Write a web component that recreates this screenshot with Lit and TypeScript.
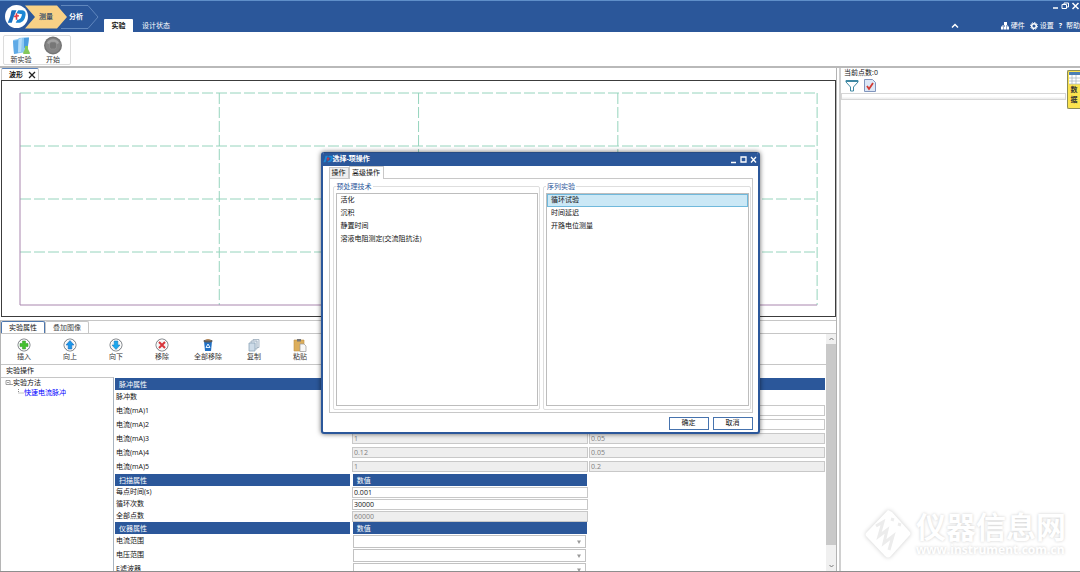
import { LitElement, html, css, svg } from "lit";
import { customElement, property } from "lit/decorators.js";

const base = css`
  :host {
    font: 7px/10px "Open Sans", "Noto Sans CJK SC", sans-serif;
    color: #111;
  }
  *,
  *::before {
    box-sizing: border-box;
  }
  svg {
    display: block;
    flex: none;
  }
  button,
  input,
  select {
    font: inherit;
    color: inherit;
    margin: 0;
    padding: 0;
    border: 0;
    border-radius: 0;
    background: none;
    min-width: 0;
    outline: none;
  }
  button {
    white-space: nowrap;
  }
`;

const brand = (size: number, tint = "#1a6fc0") => html`<svg width=${size} height=${size} viewBox="0 0 24 24" aria-hidden="true">
  <path d="M6 4h6l-3 7-3 9H1l3-8c1-3 1-6 2-8z" fill=${tint} />
  <path d="M14 4h5c5 0 5 5 4 8-1 5-4 8-9 8h-3l2-4c4 0 5-3 6-7l-7-1z" fill="#1b87d4" />
  <path d="M12 8v8M9 12l6-1" stroke="#e2333f" stroke-width="2" />
</svg>`;

const ring = svg`<circle cx="7" cy="7" r="6" fill="#f4f4f4" stroke="#6f7479"/><circle cx="7" cy="7" r="5" fill="none" stroke="#fff"/>`;
const toolIcons: Record<string, unknown> = {
  insert: svg`${ring}<path d="M5.500 3h3v2.500H11v3H8.500V11h-3V8.500H3v-3h2.500z" fill="#43c02e" stroke="#2c9a24" stroke-width=".5"/>`,
  up: svg`${ring}<path d="M7 2.500L11 7H8.800v4H5.200V7H3z" fill="#1c97ea" stroke="#0d63b8" stroke-width=".5"/>`,
  down: svg`${ring}<path d="M7 11.500L11 7H8.800V3H5.200v4H3z" fill="#1ca8ee" stroke="#0d76b8" stroke-width=".5"/>`,
  remove: svg`${ring}<path d="M4 4l6 6M10 4l-6 6" stroke="#d8363c" stroke-width="2"/>`,
  clear: svg`<path d="M3 3h8l-1 10H4z" fill="#1f6fc4"/><ellipse cx="7" cy="3" rx="4.500" ry="1.500" fill="#5c5c5c"/><path d="M4 2.500c1-2 5-2 6 0" fill="#b58a5c"/><path d="M7 6l2 3.500H5z" fill="none" stroke="#e4f2ff"/>`,
  copy: svg`<path d="M6 1.500h6v8H6z" fill="#e9eff5" stroke="#9aabbb" stroke-width=".8"/><path d="M4 3h6v8H4z" fill="#dfe8f0" stroke="#9aabbb" stroke-width=".8"/><path d="M2 5h6v8H2z" fill="#cddbe8" stroke="#8ea4b8" stroke-width=".8"/>`,
  paste: svg`<path d="M1 2h10v11H1z" fill="#dcae5c" stroke="#c09145" stroke-width=".6"/><path d="M4 1h4v2.500H4z" fill="#777"/><path d="M7 6h4l2 2v5.500H7z" fill="#f8f8f8" stroke="#9a9a9a" stroke-width=".7"/>`,
};

@customElement("app-header")
class AppHeader extends LitElement {
  static styles = [
    base,
    css`
      :host {
        display: block;
      }
      .bar {
        display: flex;
        height: 32px;
        background: #2b579a;
        border-top: 1px solid #5f8fc9;
        color: #fff;
        padding-left: 5px;
      }
      .logo {
        width: 23px;
        height: 23px;
        margin-top: 4px;
        border-radius: 50%;
        background: #fff;
        display: grid;
        place-items: center;
        flex: none;
      }
      .steps {
        display: grid;
        grid-template: 24px / 40px 22px;
        margin: 4px 17px 0 -3px;
      }
      .arrows {
        grid-area: 1 / 1 / 2 / 3;
      }
      .step {
        grid-area: 1 / 2;
        font-weight: bold;
        z-index: 1;
      }
      .current {
        grid-area: 1 / 1;
        color: #45566a;
        padding-left: 2px;
      }
      .tabs {
        display: flex;
        align-items: flex-end;
      }
      .tab {
        height: 13px;
        width: 29px;
        text-align: center;
      }
      .wide {
        width: 46px;
      }
      .active {
        background: #fff;
        color: #111;
        border-radius: 1px 1px 0 0;
        font-weight: bold;
      }
      .right {
        margin-left: auto;
        display: flex;
        flex-direction: column;
        justify-content: space-between;
        align-items: flex-end;
        padding-bottom: 1px;
      }
      .row {
        display: flex;
        align-items: center;
      }
      .win {
        gap: 2px;
      }
      .links {
        gap: 5px;
      }
      .link {
        display: flex;
        align-items: center;
        gap: 2px;
        height: 10px;
      }
      .fold {
        margin-right: 37px;
      }
      .ribbon {
        height: 36px;
        background: #fff;
        border-bottom: 2px solid #b9b9b9;
        padding: 3px;
        display: flex;
      }
      .group {
        display: flex;
        border: 1px solid #dcdcdc;
        border-radius: 2px;
        padding: 0 1px;
        height: 30px;
      }
      .big {
        width: 32px;
        display: flex;
        flex-direction: column;
        align-items: center;
        color: #333;
      }
    `,
  ];
  render() {
    return html`
      <div class="bar">
        <div class="logo">${brand(19)}</div>
        <div class="steps">
          <svg class="arrows" width="74" height="24" viewBox="0 0 74 24" aria-hidden="true">
            <path d="M0 .500h32l10 11.500-10 11.500H0L10 12z" fill="#f8d186" />
            <path d="M36 .500h27L73 12 63 23.500H36" fill="none" stroke="#6f93c6" stroke-width=".8" />
          </svg>
          <button class="step current">测量</button>
          <button class="step">分析</button>
        </div>
        <nav class="tabs">
          <button class="tab active">实验</button>
          <button class="tab wide">设计状态</button>
        </nav>
        <div class="right">
          <div class="row win">
            <button aria-label="最小化"><svg width="8" height="9"><path d="M2 7h5" stroke="#fff" stroke-width="1.500" /></svg></button>
            <button aria-label="还原"><svg width="8" height="9"><path d="M3 3.500V2h4.500v4H6M1 3.500h4.500v4H1z" fill="none" stroke="#fff" /></svg></button>
            <button aria-label="关闭"><svg width="9" height="9"><path d="M1.500 2l6 6M7.500 2l-6 6" stroke="#fff" stroke-width="1.500" /></svg></button>
          </div>
          <div class="row links">
            <button class="fold" aria-label="折叠"><svg width="8" height="8"><path d="M1 5.500l3-3 3 3" fill="none" stroke="#fff" stroke-width="1.500" /></svg></button>
            <button class="link">
              <svg width="8" height="8"><path d="M3 0h3v3H3zM0 5h2.500v2.500H0zM3 5h2.500v2.500H3zM6 5h2v2.500H6z" fill="#fff" /><path d="M4.500 3v2M1 5V4h6v1" stroke="#fff" fill="none" /></svg>硬件
            </button>
            <button class="link">
              <svg width="8" height="8"><circle cx="4" cy="4" r="2.300" fill="none" stroke="#fff" stroke-width="1.500" /><circle cx="4" cy="4" r="3.500" fill="none" stroke="#fff" stroke-dasharray="1.400 1.300" /></svg>设置
            </button>
            <button class="link"><b>?</b>&nbsp;帮助</button>
          </div>
        </div>
      </div>
      <div class="ribbon">
        <div class="group">
          <button class="big">
            <svg width="20" height="19" viewBox="0 0 20 19">
              <path d="M2 4l5-1 1-1 10-1-2 15-13 2z" fill="#8cc8f2" />
              <path d="M2 5l5-1v13l-4 1z" fill="#5faae6" />
              <path d="M8 3l3-1-1 14H7z" fill="#b5dcf8" />
              <path d="M13 2h5l-1 8-4 2z" fill="#4c9ee0" />
              <path d="M14 10h3v3l2 4c0 1-1 1-1 1h-5c-1 0-1-1-1-1l2-4z" fill="#84c85a" />
            </svg>
            新实验
          </button>
          <button class="big">
            <svg width="20" height="19" viewBox="0 0 20 19">
              <circle cx="10" cy="9.500" r="9" fill="#747474" />
              <circle cx="10" cy="9.500" r="7.500" fill="#858585" />
              <path d="M4 7c2-5 10-5 12 0-3 2-9 2-12 0z" fill="#a2a2a2" />
              <rect x="6.500" y="6" width="7" height="7" rx="2" fill="#777" stroke="#999" stroke-width=".6" />
            </svg>
            开始
          </button>
        </div>
      </div>
    `;
  }
}

@customElement("wave-chart")
class WaveChart extends LitElement {
  static styles = [
    base,
    css`
      :host {
        display: block;
      }
      .tabs {
        height: 12px;
        display: flex;
        padding-left: 1px;
      }
      .tab {
        display: flex;
        align-items: center;
        gap: 5px;
        width: 38px;
        padding-left: 7px;
        border: 1px solid #c9c9c9;
        border-top-color: #5b84bd;
        border-bottom: 0;
        border-radius: 2px 2px 0 0;
        font-weight: bold;
      }
      .frame {
        margin-left: 1px;
        border: 1px solid #3c3c3c;
        height: 237px;
        padding: 12px 18px 11px;
      }
      .plot {
        width: 100%;
        height: 100%;
        overflow: visible;
      }
      .grid {
        stroke: #96d4bd;
        stroke-dasharray: 11 3;
      }
      .axis {
        stroke: #a986ae;
      }
    `,
  ];
  render() {
    const steps = [25, 50, 75, 100];
    return html`
      <div class="tabs">
        <div class="tab">
          波形
          <button aria-label="关闭"><svg width="8" height="8"><path d="M1 1l6 6M7 1l-6 6" stroke="#222" stroke-width="1.300" /></svg></button>
        </div>
      </div>
      <div class="frame">
        <svg class="plot" aria-hidden="true">
          ${steps.map((p) => svg`<line class="grid" x1="${p}%" x2="${p}%" y1="0" y2="100%"/>`)}
          ${steps.map((p) => svg`<line class="grid" x1="0" x2="100%" y1="${p - 25}%" y2="${p - 25}%"/>`)}
          <line class="axis" x1="0" x2="0" y1="0" y2="100%" />
          <line class="axis" x1="0" x2="100%" y1="100%" y2="100%" />
        </svg>
      </div>
    `;
  }
}

type Field = { label: string; values: string[]; kind?: "off" | "select" };
type Section = { heads: string[]; fields: Field[]; tight?: boolean };

const sections: Section[] = [
  {
    heads: ["脉冲属性", "", ""],
    fields: [
      { label: "脉冲数", values: [""] },
      { label: "电流(mA)1", values: ["", ""] },
      { label: "电流(mA)2", values: ["", ""] },
      { label: "电流(mA)3", values: ["1", "0.05"], kind: "off" },
      { label: "电流(mA)4", values: ["0.12", "0.05"], kind: "off" },
      { label: "电流(mA)5", values: ["1", "0.2"], kind: "off" },
    ],
  },
  {
    heads: ["扫描属性", "数值"],
    tight: true,
    fields: [
      { label: "每点时间(s)", values: ["0.001"] },
      { label: "循环次数", values: ["30000"] },
      { label: "全部点数", values: ["60000"], kind: "off" },
    ],
  },
  {
    heads: ["仪器属性", "数值"],
    fields: ["电流范围", "电压范围", "E滤波器"].map((label) => ({ label, values: [""], kind: "select" as const })),
  },
];

const tools = [
  ["insert", "插入"],
  ["up", "向上"],
  ["down", "向下"],
  ["remove", "移除"],
  ["clear", "全部移除"],
  ["copy", "复制"],
  ["paste", "粘贴"],
];

@customElement("experiment-panel")
class ExperimentPanel extends LitElement {
  static styles = [
    base,
    css`
      :host {
        display: flex;
        flex-direction: column;
        min-height: 0;
        border-top: 1px solid #c6c6c6;
        border-left: 1px solid #b5b5b5;
      }
      .tabs {
        display: flex;
        height: 12px;
        flex: none;
      }
      .tab {
        width: 44px;
        border: 1px solid #c6c6c6;
        border-bottom: 0;
        border-radius: 2px 2px 0 0;
        color: #444;
      }
      .active {
        border-color: #4d76ad;
        color: #111;
      }
      .body {
        flex: 1;
        min-height: 0;
        display: flex;
        border-top: 1px solid #c6c6c6;
      }
      .content {
        flex: 1;
        min-width: 0;
        display: flex;
        flex-direction: column;
      }
      .tools {
        display: flex;
        height: 31px;
        flex: none;
        border-bottom: 1px solid #c6c6c6;
        padding-top: 4px;
      }
      .tool {
        width: 46px;
        display: flex;
        flex-direction: column;
        align-items: center;
        color: #333;
      }
      .caption {
        height: 12px;
        flex: none;
        padding: 1px 5px;
      }
      .split {
        flex: 1;
        min-height: 0;
        display: flex;
      }
      .tree {
        width: 113px;
        border-top: 1px solid #c6c6c6;
        border-right: 1px solid #a9b4c0;
        padding: 0 4px;
        flex: none;
      }
      .node {
        display: flex;
        align-items: center;
        height: 10px;
      }
      .child {
        padding-left: 11px;
        color: #00f;
      }
      .props {
        flex: 1;
        min-width: 0;
        overflow: hidden;
        padding: 1px 1px 0;
      }
      .grid {
        display: grid;
        grid-template-columns: repeat(3, 1fr);
        column-gap: 1px;
        grid-auto-rows: 14px;
      }
      .tight {
        grid-auto-rows: 12px;
      }
      .heads {
        grid-auto-rows: 12px;
        column-gap: 3px;
      }
      .head {
        background: #2b579a;
        color: #fff;
        padding-left: 4px;
        line-height: 13px;
      }
      .name {
        grid-column: 1;
        padding-left: 1px;
        align-self: center;
      }
      .field {
        height: 11px;
        margin-top: 1px;
        border: 1px solid #c8c8c8;
        background: #fff;
        width: 100%;
        padding-left: 1px;
      }
      .field:disabled {
        background: #eee;
        color: #808080;
      }
      .picker {
        display: grid;
        grid-template-columns: 1fr 8px;
        align-items: center;
        margin: 1px 2px 0 1px;
        height: 13px;
        border: 1px solid #c2c2c2;
      }
      .select {
        grid-area: 1 / 1 / 2 / 3;
        appearance: none;
        height: 11px;
      }
      .arrow {
        grid-area: 1 / 2;
        pointer-events: none;
      }
      .scroll {
        width: 10px;
        background: #f0f0f0;
        display: flex;
        flex-direction: column;
        align-items: center;
      }
      .thumb {
        flex: 1;
        width: 100%;
        background: #c9c9c9;
      }
      .end {
        height: 10px;
        display: grid;
        place-items: center;
      }
      .last {
        height: 26px;
        align-items: end;
      }
    `,
  ];
  private field(f: Field, v: string, id: string) {
    if (f.kind === "select")
      return html`<div class="picker">
        <select class="select" id=${id}></select>
        <svg class="arrow" width="5" height="4"><path d="M0 .500h4L2 4z" fill="#999" /></svg>
      </div>`;
    return html`<input class="field" id=${id} aria-label=${f.label} .value=${v} ?disabled=${f.kind === "off"} />`;
  }
  render() {
    return html`
      <div class="tabs">
        <button class="tab active">实验属性</button>
        <button class="tab">叠加图像</button>
      </div>
      <div class="body">
        <div class="content">
          <div class="tools">
            ${tools.map(
              ([icon, label]) => html`<button class="tool"><svg width="14" height="14" viewBox="0 0 14 14">${toolIcons[icon]}</svg>${label}</button>`
            )}
          </div>
          <div class="caption">实验操作</div>
          <div class="split">
            <div class="tree">
              <div class="node">
                <svg width="8" height="8"><path d="M1 1.500h4v4H1zM2 3.500h2M5 5.500h3" fill="none" stroke="#888" stroke-width=".8" /></svg>实验方法
              </div>
              <div class="node child">
                <svg width="8" height="8"><path d="M2.500 0v4H8" fill="none" stroke="#888" stroke-dasharray="1 1" /></svg>快速电流脉冲
              </div>
            </div>
            <div class="props">
              ${sections.map(
                (s, i) => html`
                  <div class="grid heads">${s.heads.map((h) => html`<div class="head">${h}</div>`)}</div>
                  <div class="grid ${s.tight ? "tight" : ""}">
                    ${s.fields.map(
                      (f, j) => html`<label class="name" for="f${i}-${j}-0">${f.label}</label>${f.values.map((v, k) => this.field(f, v, `f${i}-${j}-${k}`))}`
                    )}
                  </div>
                `
              )}
            </div>
          </div>
        </div>
        <div class="scroll">
          <div class="end"><svg width="5" height="4"><path d="M.500 3l2-2 2 2" fill="none" stroke="#777" /></svg></div>
          <div class="thumb"></div>
          <div class="end last"><svg width="5" height="7"><path d="M.500 1l2 2 2-2" fill="none" stroke="#777" /></svg></div>
        </div>
      </div>
    `;
  }
}

@customElement("data-panel")
class DataPanel extends LitElement {
  static styles = [
    base,
    css`
      :host {
        display: flex;
        flex-direction: column;
        justify-content: space-between;
      }
      .top {
        display: flex;
      }
      .main {
        flex: 1;
      }
      .count {
        padding-left: 3px;
      }
      .icons {
        display: flex;
        align-items: center;
        gap: 5px;
        padding-left: 4px;
        height: 15px;
      }
      .columns {
        height: 7px;
        border: 1px solid #d6d6d6;
        background: linear-gradient(#fff 50%, #ececec);
      }
      .side {
        margin: 2px 0 0 1px;
        width: 13px;
        height: 39px;
        border: 1px solid #8c8c55;
        border-right: 0;
        border-radius: 2px 0 0 2px;
        background: #fbe34e;
        display: flex;
        flex-direction: column;
        align-items: center;
        font-weight: bold;
        color: #333;
      }
      .mark {
        align-self: flex-end;
        display: flex;
        align-items: center;
        gap: 4px;
        margin: 0 14px 12px 0;
        color: #fff;
        text-shadow: 0 0 3px #ccc;
        font-weight: bold;
      }
      .diamond {
        filter: drop-shadow(0 0 2px #ccc);
      }
      .site {
        font-size: 30px;
        line-height: 32px;
      }
      .url {
        font-size: 12px;
        line-height: 14px;
      }
    `,
  ];
  render() {
    return html`
      <div class="top">
        <div class="main">
          <div class="count">当前点数:0</div>
          <div class="icons">
            <button aria-label="筛选">
              <svg width="14" height="13"><path d="M1 1.500h12v1.500L8.500 8v4h-3V8L1 3z" fill="#fff" stroke="#3f88a3" /><path d="M1 2h12" stroke="#3f88a3" stroke-width="2" /></svg>
            </button>
            <button aria-label="选择">
              <svg width="12" height="13"><path d="M.500 .500h8l3 3v9H.500z" fill="#dce7f6" stroke="#8095bd" /><path d="M3 7l2 3 4-6" fill="none" stroke="#d23a32" stroke-width="1.800" /></svg>
            </button>
          </div>
          <div class="columns"></div>
        </div>
        <button class="side">
          <svg width="12" height="14"><path d="M1 1h11v12H1z" fill="#fff" /><path d="M1 1h11v3H1z" fill="#4c7fb5" /><path d="M1 7h11M1 10h11M1 13h11M4 4v9M8 4v9" stroke="#a5b3bd" stroke-width=".7" /></svg>
          <span>数</span><span>据</span>
        </button>
      </div>
      <div class="mark">
        <svg class="diamond" width="48" height="50" viewBox="0 0 48 50" aria-hidden="true">
          <path d="M24 1l4 2 17 19c2 2 2 3 0 5L27 47c-2 2-4 2-6 0L3 28c-2-2-2-3 0-5z" fill="#fff" />
          <path d="M12 17l7-4-4 14 8-6-3 13 9-7-4 14M27 10l3 1M34 15l3 1" fill="none" stroke="#ececec" stroke-width="3" />
        </svg>
        <div>
          <div class="site">仪器信息网</div>
          <div class="url">www.instrument.com.cn</div>
        </div>
      </div>
    `;
  }
}

@customElement("item-list")
class ItemList extends LitElement {
  @property() heading = "";
  @property({ attribute: false }) items: string[] = [];
  @property({ type: Number }) selected = -1;
  static styles = [
    base,
    css`
      :host {
        display: flex;
        flex: 1;
      }
      .set {
        flex: 1;
        min-width: 0;
        margin: 0;
        padding: 0 1px 3px 2px;
        border: 1px solid #dedede;
        border-radius: 2px;
        display: flex;
        flex-direction: column;
      }
      .title {
        color: #2b579a;
        padding: 0 1px;
      }
      .list {
        list-style: none;
        margin: 1px 0 0;
        padding: 0;
        height: 213px;
        border: 1px solid #bdbdbd;
      }
      .item {
        height: 13px;
        padding-left: 3px;
        border: 1px solid transparent;
      }
      .on {
        background: #cbe8f6;
        border-color: #70b9dc;
      }
    `,
  ];
  render() {
    return html`<fieldset class="set">
      <legend class="title">${this.heading}</legend>
      <ul class="list" role="listbox" aria-label=${this.heading}>
        ${this.items.map((t, i) => html`<li class="item ${i === this.selected ? "on" : ""}" role="option" aria-selected=${i === this.selected}>${t}</li>`)}
      </ul>
    </fieldset>`;
  }
}

@customElement("select-dialog")
class SelectDialog extends LitElement {
  static styles = [
    base,
    css`
      :host {
        display: block;
        width: 439px;
        background: #fff;
        border: 2px solid #2b579a;
        border-top: 0;
        border-radius: 3px;
        box-shadow: 0 0 5px #0009;
        overflow: hidden;
        box-sizing: border-box;
      }
      .bar {
        height: 14px;
        background: #2b579a;
        border-top: 1px solid #274b84;
        color: #fff;
        font-weight: bold;
        display: flex;
        align-items: center;
      }
      .space {
        flex: 1;
      }
      .win {
        margin-left: 1px;
      }
      .tabs {
        display: flex;
        align-items: flex-end;
        height: 12px;
        padding-left: 6px;
      }
      .tab {
        height: 11px;
        width: 20px;
        background: #efefef;
        border: 1px solid #c8c8c8;
        border-bottom: 0;
      }
      .active {
        height: 13px;
        width: 35px;
        background: #fff;
        z-index: 1;
        margin-bottom: -1px;
      }
      .page {
        margin: 0 5px 0 6px;
        border: 1px solid #c8c8c8;
        padding: 3px 1px 2px 3px;
        display: flex;
        gap: 3px;
      }
      .actions {
        display: flex;
        justify-content: flex-end;
        gap: 4px;
        padding: 4px 5px 2px;
      }
      .act {
        width: 40px;
        height: 13px;
        border: 1px solid #4673ae;
        background: #fff;
      }
    `,
  ];
  render() {
    return html`
      <div class="bar">
        ${brand(10, "#1b87d4")}<span>选择-项操作</span><span class="space"></span>
        <button class="win" aria-label="最小化"><svg width="8" height="9"><path d="M1 7.500h5" stroke="#fff" stroke-width="1.300" /></svg></button>
        <button class="win" aria-label="最大化"><svg width="9" height="9"><path d="M2 2h5v5H2z" fill="none" stroke="#fff" stroke-width="1.300" /></svg></button>
        <button class="win" aria-label="关闭"><svg width="9" height="9"><path d="M2 2l5 5.500M7 2L2 7.500" stroke="#fff" stroke-width="1.300" /></svg></button>
      </div>
      <div class="tabs">
        <button class="tab">操作</button>
        <button class="tab active">高级操作</button>
      </div>
      <div class="page">
        <item-list heading="预处理技术" .items=${["活化", "沉积", "静置时间", "溶液电阻测定(交流阻抗法)"]}></item-list>
        <item-list heading="序列实验" .items=${["循环试验", "时间延迟", "开路电位测量"]} selected="0"></item-list>
      </div>
      <div class="actions">
        <button class="act">确定</button>
        <button class="act">取消</button>
      </div>
    `;
  }
}

@customElement("app-root")
class AppRoot extends LitElement {
  static styles = [
    base,
    css`
      :host {
        display: flex;
        flex-direction: column;
        height: 100vh;
        position: relative;
        overflow: hidden;
        background: #fff;
        border-bottom: 1px solid #8e8e8e;
        box-sizing: border-box;
      }
      .main {
        flex: 1;
        min-height: 0;
        display: flex;
      }
      .left {
        flex: 7;
        min-width: 0;
        display: flex;
        flex-direction: column;
        gap: 3px;
        border-right: 1px solid #b3b3b3;
      }
      .experiment {
        flex: 1;
      }
      .right {
        flex: 2;
        min-width: 0;
        margin-left: 2px;
        border-left: 2px solid #d0d0d0;
      }
      .overlay {
        position: absolute;
        inset: 0;
        padding-top: 14px;
        display: grid;
        place-items: center;
      }
    `,
  ];
  render() {
    return html`
      <app-header></app-header>
      <div class="main">
        <div class="left">
          <wave-chart></wave-chart>
          <experiment-panel class="experiment"></experiment-panel>
        </div>
        <data-panel class="right"></data-panel>
      </div>
      <div class="overlay"><select-dialog></select-dialog></div>
    `;
  }
}
